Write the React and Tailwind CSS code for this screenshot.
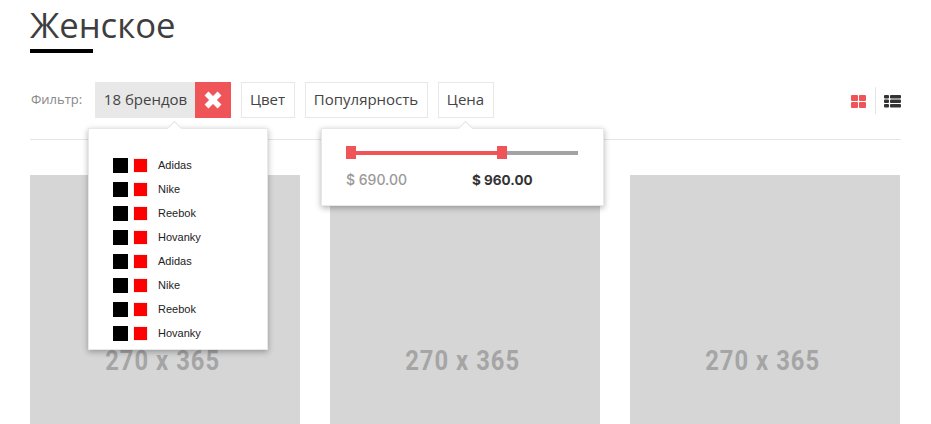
import { useState } from "react";

const brands = ["Adidas", "Nike", "Reebok", "Hovanky", "Adidas", "Nike", "Reebok", "Hovanky"];

function Arrow({ className }) {
  return (
    <div className={"absolute top-[-6px] w-[11px] h-[11px] rotate-45 bg-white border-l border-t border-[#e5e5e5] " + className}></div>
  );
}

function FilterBtn({ children, className }) {
  return (
    <button className={"h-9 pb-[2px] pr-px border border-[#e8e8e8] bg-white text-[15px] text-[#444] " + className}>{children}</button>
  );
}

function App() {
  const [brandsOpen] = useState(true);

  return (
    <div className="w-[931px] h-[424px] overflow-hidden bg-white relative font-['Open_Sans',sans-serif]">
      <div className="pl-[30px] pr-[30px]">
        {/* Title */}
        <h1 className="pt-[3px] text-[34.7px] leading-[44px] text-[#3e3e3e]">Женское</h1>
        <div className="w-[63px] h-[4px] mt-[2px] bg-black"></div>

        {/* Filter row */}
        <div className="mt-[29px] flex items-center h-9 relative">
          <span className="w-[65px] pl-px pb-[1px] text-[13px] text-[#888]">Фильтр:</span>
          <div className="flex h-9 relative">
            <div className="w-[100px] pb-[2px] pl-px bg-[#e8e8e8] text-[15px] text-[#444] flex items-center justify-center">18 брендов</div>
            <div className="w-9 bg-[#ef5459] flex items-center justify-center">
              <svg width="18" height="18" viewBox="0 0 18 18">
                <path d="M2.5 2.5 L15.5 15.5 M15.5 2.5 L2.5 15.5" stroke="#fff" strokeWidth="5.5" />
              </svg>
            </div>
            {brandsOpen && (
              <div className="absolute left-[-7px] top-[46px] w-[180px] h-[222px] bg-white border border-[#e8e8e8] shadow-[0_2px_6px_rgba(0,0,0,0.3)] z-10 pt-[29px] pl-[24px]">
                <Arrow className="left-[80px]" />
                <div className="flex flex-col gap-[9px] relative">
                  {brands.map((name, i) => (
                    <div key={i} className="flex items-center h-[15px]">
                      <div className="w-[15px] h-[15px] bg-black"></div>
                      <div className="w-[15px] h-[15px] ml-[5px] bg-[#ff0000] border border-[#eee]"></div>
                      <span className="ml-[10px] text-[11px] text-[#222] font-['Liberation_Sans',sans-serif]">{name}</span>
                    </div>
                  ))}
                </div>
              </div>
            )}
          </div>
          <div className="flex gap-[10px] ml-[10px]">
            <FilterBtn className="w-[54px]">Цвет</FilterBtn>
            <FilterBtn className="w-[123px]">Популярность</FilterBtn>
            <div className="relative">
              <FilterBtn className="w-[56px]">Цена</FilterBtn>
              <div className="absolute left-[-117px] top-[46px] w-[283px] h-[78px] bg-white border border-[#e8e8e8] shadow-[0_2px_6px_rgba(0,0,0,0.3)] z-10">
                <Arrow className="left-[138px]" />
                <div className="relative mt-[17px] ml-[24px] w-[232px] h-[13px] flex items-center">
                  <div className="w-[155px] h-1 bg-[#ef5459]"></div>
                  <div className="flex-1 h-1 bg-[#a3a3a3]"></div>
                  <div className="absolute left-0 top-0 w-[10px] h-[13px] bg-[#ef5459]"></div>
                  <div className="absolute left-[151px] top-0 w-[10px] h-[13px] bg-[#ef5459]"></div>
                </div>
                <div className="flex items-center mt-[12px] ml-[24px] text-[14px] leading-[18px] font-['Inter',sans-serif]">
                  <span className="w-[126px] font-medium text-[#999]">$ 690.00</span>
                  <span className="text-[13.5px] font-bold text-[#333]">$ 960.00</span>
                </div>
              </div>
            </div>
          </div>

          {/* View switch */}
          <div className="ml-auto flex items-center mr-[-1px]">
            <svg width="16" height="14" viewBox="0 0 16 14" className="mr-[9px] mt-[1px]">
              <rect x="1" y="1" width="7" height="6" rx="1" fill="#ef5459" />
              <rect x="9" y="1" width="7" height="6" rx="1" fill="#ef5459" />
              <rect x="1" y="8" width="7" height="6" rx="1" fill="#ef5459" />
              <rect x="9" y="8" width="7" height="6" rx="1" fill="#ef5459" />
            </svg>
            <div className="w-px h-[27px] bg-[#e5e5e5]"></div>
            <svg width="18" height="14" viewBox="0 0 18 14" className="ml-[8px] mt-[1px]">
              <rect x="0" y="1" width="5" height="3.5" rx="1" fill="#333" />
              <rect x="6" y="1" width="11" height="3.5" rx="1" fill="#333" />
              <rect x="0" y="5.5" width="5" height="3.5" rx="1" fill="#333" />
              <rect x="6" y="5.5" width="11" height="3.5" rx="1" fill="#333" />
              <rect x="0" y="10" width="5" height="3.5" rx="1" fill="#333" />
              <rect x="6" y="10" width="11" height="3.5" rx="1" fill="#333" />
            </svg>
          </div>
        </div>

        <div className="h-px mt-[21px] w-[871px] bg-[#e5e5e5]"></div>

        {/* Product grid */}
        <div className="mt-[35px] flex gap-[30px]">
          {[0, 1, 2].map((i) => (
            <div key={i} className="w-[270px] h-[365px] shrink-0 bg-[#d6d6d6] flex items-center justify-center">
              <span className="mt-[7px] mr-[4px] text-[28px] tracking-[1.2px] font-bold text-[#a5a5a5] font-['Roboto',sans-serif] scale-x-[0.85] whitespace-nowrap">270 x 365</span>
            </div>
          ))}
        </div>
      </div>
    </div>
  );
}

export default App
